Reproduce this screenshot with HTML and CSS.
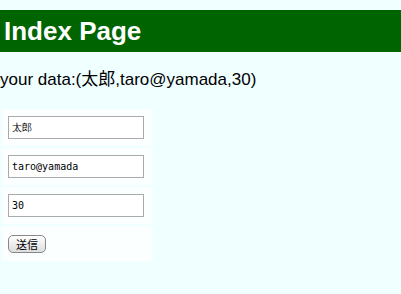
FILE: index.html
```html
<!DOCTYPE html>
<html lang="ja">
<head>
    <meta charset="UTF-8">
    <title>Index Page</title>
    <link rel="stylesheet" href="styles.css">
</head>
<body>
    <h1>Index Page</h1>
    <p class="message">your data:(太郎,taro@yamada,30)</p>
    <form method="post" action="/">
        <table class="form-table">
            <tr><td><input type="text" name="name" value="太郎"></td></tr>
            <tr><td><input type="text" name="mail" value="taro@yamada"></td></tr>
            <tr><td><input type="text" name="age" value="30"></td></tr>
            <tr><td class="submit-cell"><input type="submit" value="送信"></td></tr>
        </table>
    </form>
</body>
</html>
```
FILE: styles.css
```css
body {
    margin: 0;
    background-color: #f0ffff;
    font-family: "Liberation Sans", "Noto Sans CJK JP", sans-serif;
    color: #000;
}
h1 {
    margin: 10px 0 0;
    padding: 0 4px;
    height: 42px;
    line-height: 42px;
    font-size: 26px;
    background-color: #006400;
    color: white;
}
.message {
    margin: 17px 0 17px;
    font-size: 17px;
    line-height: 21px;
}
.form-table {
    border-spacing: 2px;
}
.form-table td {
    background-color: #fbffff;
    padding: 7px 8px 7px 6px;
    height: 23px;
}
.form-table input[type="text"] {
    box-sizing: border-box;
    width: 136px;
    height: 23px;
    margin: 0;
    padding: 1px 3px;
    border: 1px solid #aaa;
    font-family: "DejaVu Sans Mono", monospace;
    font-size: 10px;
    background: white;
}
.form-table .submit-cell {
    height: 21px;
}
.form-table input[type="submit"] {
    height: 18px;
    margin: 0;
    padding: 0 7px;
    font-family: "Noto Sans CJK JP", sans-serif;
    font-size: 11px;
    border: 1px solid #888;
    border-radius: 5px;
    background: linear-gradient(#fff, #ddd);
}
```
